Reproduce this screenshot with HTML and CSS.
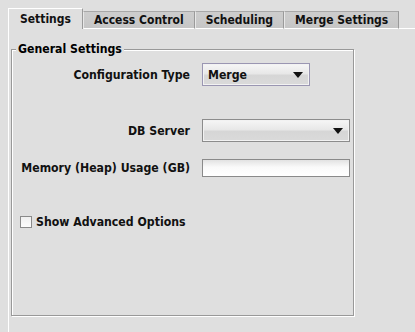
FILE: index.html
```html
<!DOCTYPE html>
<html>
<head>
    <title>Settings</title>
    <meta charset="UTF-8">
    <link rel="stylesheet" href="styles.css">
</head>
<body>
    <div class="tabs">
        <div class="tab active">Settings</div>
        <div class="tab">Access Control</div>
        <div class="tab">Scheduling</div>
        <div class="tab">Merge Settings</div>
        <div class="tab-fill"></div>
    </div>

    <div class="panel">
        <div class="group">
            <div class="group-title">General Settings</div>

            <div class="row row-config">
                <div class="label">Configuration Type</div>
                <div class="combo combo-merge">
                    <span class="combo-text">Merge</span>
                    <span class="arrow"></span>
                </div>
            </div>

            <div class="row row-db">
                <div class="label">DB Server</div>
                <div class="combo combo-wide">
                    <span class="combo-text"></span>
                    <span class="arrow"></span>
                </div>
            </div>

            <div class="row row-memory">
                <div class="label">Memory (Heap) Usage (GB)</div>
                <div class="textfield"></div>
            </div>

            <div class="check-row">
                <span class="checkbox"></span>
                <span class="check-label">Show Advanced Options</span>
            </div>
        </div>
    </div>
</body>
</html>
```

FILE: styles.css
```css
body {
    margin: 0;
    background-color: #dfdfdf;
    font-family: "DejaVu Sans Condensed", "DejaVu Sans", sans-serif;
    font-size: 12.2px;
    font-weight: bold;
    color: #111;
}

/* tab strip */
.tabs {
    display: flex;
    align-items: flex-end;
    padding: 8px 0 0 8px;
    height: 21px;
    font-size: 12px;
}
.tab {
    height: 16px;
    line-height: 17px;
    padding: 0 10px;
    background: linear-gradient(#cdcdcd, #c6c6c6);
    border-top: 1px solid #a8a8a8;
    border-left: 1px solid #e8e8e8;
    border-right: 1px solid #9a9a9a;
    border-bottom: 1px solid #fff;
    white-space: nowrap;
}
.tab.active {
    height: 20px;
    line-height: 21px;
    padding: 0 11px;
    background: #dfdfdf;
    border-top: 1px solid #fff;
    border-left: 1px solid #fff;
    border-right: 1px solid #9a9a9a;
    border-bottom: none;
}
.tab-fill {
    flex: 1;
    border-bottom: 1px solid #fff;
}

/* content panel */
.panel {
    box-sizing: border-box;
    margin-left: 8px;
    padding: 20px 0 0 2px;
    height: 303px;
    border-left: 1px solid #fff;
}
.group {
    position: relative;
    width: 341px;
    height: 265px;
    border: 1px solid #999;
    box-shadow: 1px 1px 0 #fff, inset 1px 1px 0 #fff;
}
.group-title {
    position: absolute;
    top: -8px;
    left: 4px;
    padding: 0 2px;
    background-color: #dfdfdf;
    color: #000;
}

.row {
    display: flex;
    align-items: center;
}
.label {
    width: 178px;
    margin-right: 12px;
    text-align: right;
    white-space: nowrap;
}
.row-config { margin-top: 13px; height: 23px; }
.row-db { margin-top: 33px; height: 23px; }
.row-memory { margin-top: 17px; height: 18px; }

.combo {
    box-sizing: border-box;
    height: 23px;
    display: flex;
    align-items: center;
    justify-content: space-between;
    padding: 0 6px 0 5px;
    border: 1px solid #8c8c8c;
    background: linear-gradient(#f6f6f6, #e8e8e8 45%, #d6d6d6 55%, #dadada);
    box-shadow: inset 0 0 0 1px #f2f2f2;
}
.combo-merge {
    width: 108px;
    border-color: #9a96b2;
}
.combo-wide {
    width: 148px;
}
.arrow {
    width: 0;
    height: 0;
    border-left: 5px solid transparent;
    border-right: 5px solid transparent;
    border-top: 6px solid #111;
}

.textfield {
    box-sizing: border-box;
    width: 148px;
    height: 18px;
    border: 1px solid #8a8a8a;
    background: linear-gradient(#e2e2e2, #fafafa 45%, #fff);
}

.check-row {
    display: flex;
    align-items: center;
    margin: 37px 0 0 8px;
    height: 16px;
}
.checkbox {
    box-sizing: border-box;
    width: 12px;
    height: 12px;
    margin-right: 4px;
    border: 1px solid #8a8a8a;
    background: linear-gradient(#f0f0f0, #fcfcfc);
}
```
